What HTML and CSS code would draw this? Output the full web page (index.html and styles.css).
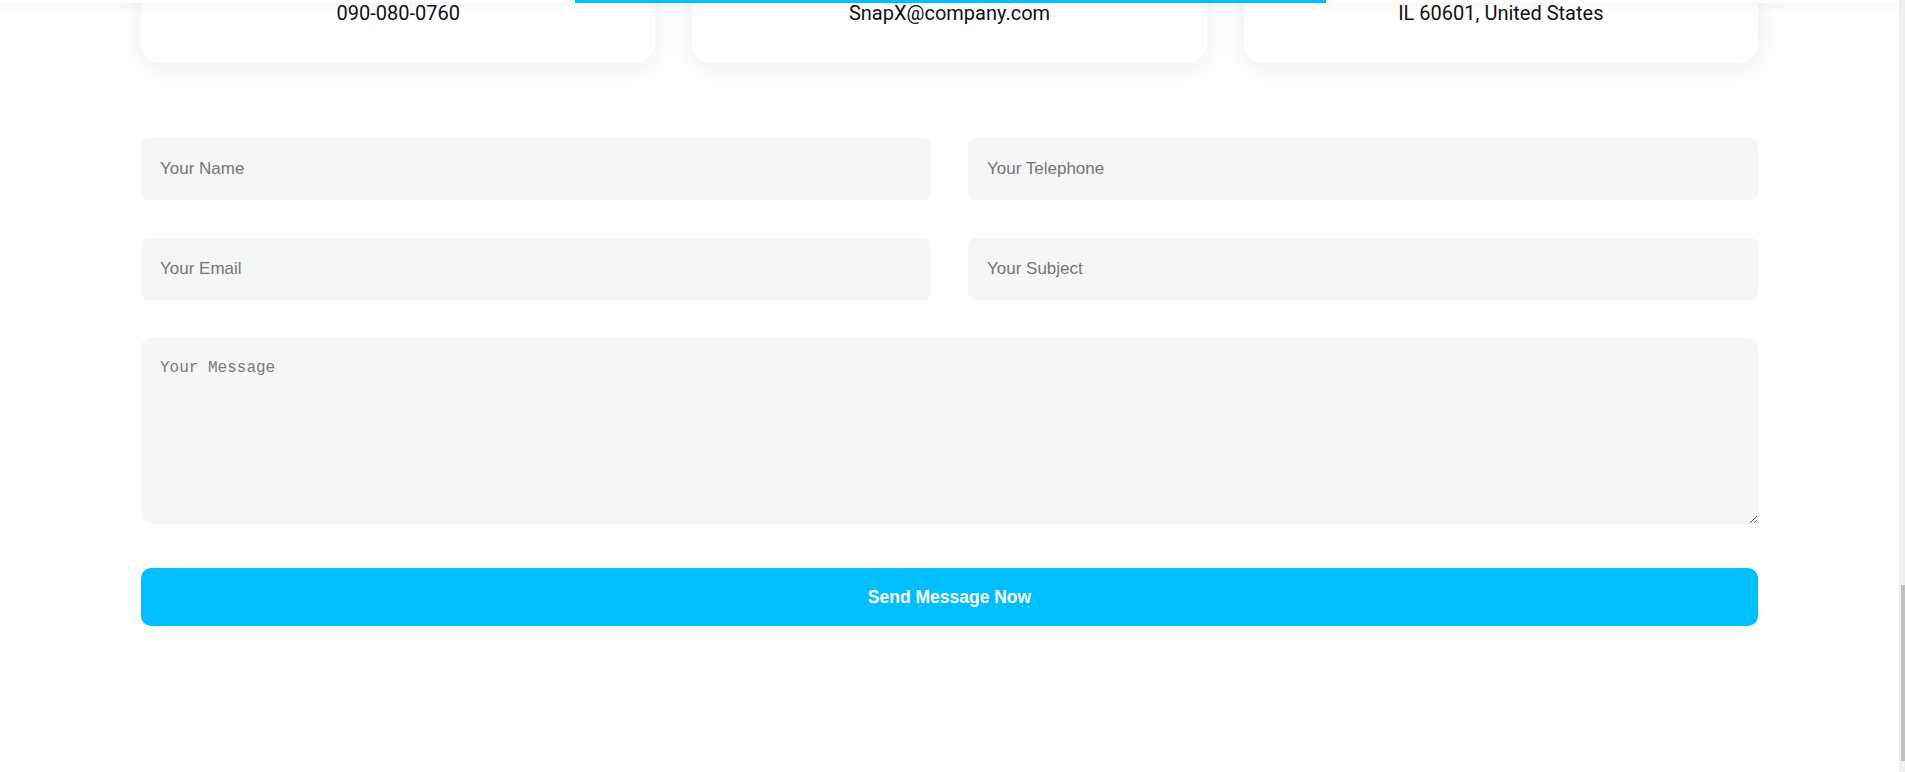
FILE: index.html
```html
<!DOCTYPE html>
<html lang="en">
<head>
<meta charset="utf-8">
<title>Contact</title>
<link rel="stylesheet" href="styles.css">
</head>
<body>
<header class="topbar"><span class="topbar-progress"></span></header>
<main class="page">
  <div class="container">
    <section class="cards">
      <div class="card"><p class="card-text">090-080-0760</p></div>
      <div class="card"><p class="card-text">SnapX@company.com</p></div>
      <div class="card"><p class="card-text">IL 60601, United States</p></div>
    </section>
    <form class="form">
      <div class="form-grid">
        <input class="field" type="text" placeholder="Your Name">
        <input class="field" type="text" placeholder="Your Telephone">
        <input class="field" type="email" placeholder="Your Email">
        <input class="field" type="text" placeholder="Your Subject">
      </div>
      <textarea class="message" placeholder="Your Message"></textarea>
      <button class="send" type="button">Send Message Now</button>
    </form>
  </div>
</main>
<div class="scrollbar"><div class="scrollbar-thumb"></div></div>
</body>
</html>
```
FILE: styles.css
```css
html, body {
  margin: 0;
  padding: 0;
  height: 772px;
  overflow: hidden;
  background: #ffffff;
}
body {
  font-family: "Liberation Sans", Arial, sans-serif;
}
.topbar {
  position: fixed;
  top: 0;
  left: 0;
  right: 6px;
  height: 3px;
  background: #ffffff;
  box-shadow: 0 2px 8px rgba(0, 0, 0, 0.10);
  z-index: 10;
}
.topbar-progress {
  position: absolute;
  left: 575px;
  top: 0;
  width: 751px;
  height: 3px;
  background: #00bfff;
}
.page {
  padding-right: 6px;
}
.container {
  width: 1617px;
  margin: 0 auto;
}
.cards {
  display: grid;
  grid-template-columns: repeat(3, 1fr);
  gap: 37px;
  margin-top: -41px;
}
.card {
  background: #ffffff;
  border-radius: 20px;
  box-shadow: 0 6px 30px rgba(0, 0, 0, 0.08);
  padding: 39px 20px 35px;
  text-align: center;
}
.card-text {
  margin: 0;
  font-family: Roboto, "Liberation Sans", sans-serif;
  font-size: 20px;
  line-height: 30px;
  color: #111111;
}
.form {
  margin-top: 75px;
  display: flex;
  flex-direction: column;
}
.form-grid {
  display: grid;
  grid-template-columns: 1fr 1fr;
  column-gap: 37px;
  row-gap: 38px;
}
.field {
  height: 62px;
  box-sizing: border-box;
  border: none;
  outline: none;
  border-radius: 8px;
  background: #f6f6f6;
  padding: 0 19px;
  font-family: "Liberation Sans", Arial, sans-serif;
  font-size: 17px;
  color: #333;
}
.field::placeholder {
  color: #757575;
}
.message {
  margin-top: 38px;
  height: 186px;
  box-sizing: border-box;
  border: none;
  outline: none;
  border-radius: 10px;
  background: #f6f6f6;
  padding: 21px 19px 18px;
  font-family: "Liberation Mono", "DejaVu Sans Mono", monospace;
  font-size: 16px;
  color: #333;
  resize: vertical;
}
.message::placeholder {
  color: #7a7a7a;
}
.send {
  margin-top: 44px;
  height: 58px;
  border: none;
  border-radius: 10px;
  background: #00bfff;
  color: #ffffff;
  font-family: "Liberation Sans", Arial, sans-serif;
  font-weight: bold;
  font-size: 17.5px;
  cursor: pointer;
}
.scrollbar {
  position: fixed;
  top: 0;
  right: 0;
  width: 6px;
  height: 772px;
  background: #f0f0f0;
}
.scrollbar-thumb {
  position: absolute;
  left: 2px;
  right: 0;
  top: 585px;
  height: 176px;
  background: #c1c1c1;
}
```
